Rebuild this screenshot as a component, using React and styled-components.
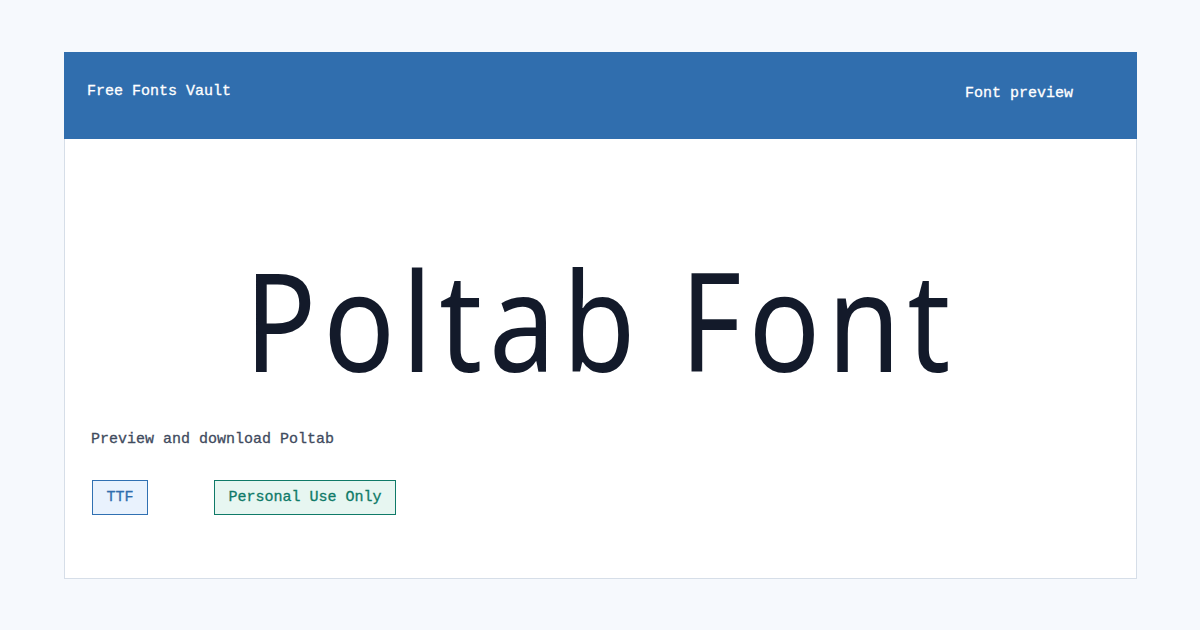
import React from "react";
import styled, { createGlobalStyle } from "styled-components";

const GlobalStyle = createGlobalStyle`
  html, body {
    margin: 0;
    padding: 0;
    background: #f6f9fd;
  }
  body {
    font-family: "Liberation Mono", "DejaVu Sans Mono", monospace;
    -webkit-text-stroke: 0.3px currentColor;
  }
`;

const Page = styled.div`
  width: 1200px;
  height: 630px;
  box-sizing: border-box;
  padding: 52px 63px 0 64px;
`;

const Card = styled.div`
  height: 527px;
  box-sizing: border-box;
  background: #ffffff;
  border: 1px solid #d6dee8;
  display: flex;
  flex-direction: column;
`;

const Header = styled.header`
  height: 87px;
  margin: -1px -1px 0;
  background: #306eae;
  color: #ffffff;
  display: flex;
  justify-content: space-between;
  align-items: flex-start;
  padding: 0 64px 0 23px;
  box-sizing: border-box;
  font-size: 15px;
`;

const Brand = styled.div`
  padding-top: 31px;
`;

const Nav = styled.div`
  padding-top: 33px;
`;

const Body = styled.main`
  flex: 1;
  display: flex;
  flex-direction: column;
  padding: 0 26px;
`;

const Title = styled.h1`
  margin: 110px 6px 0 0;
  text-align: center;
  font-family: "Noto Sans", "Open Sans", sans-serif;
  font-weight: 400;
  font-size: 138px;
  line-height: 1;
  color: #131a2a;
  -webkit-text-stroke: 0;
`;

/* the display face is narrow with open spacing */
const TitleText = styled.span`
  display: inline-block;
  padding-left: 8px;
  letter-spacing: 8px;
  transform: scaleX(0.86);
  transform-origin: center;
`;

const Subtitle = styled.p`
  margin: 44px 0 0;
  font-size: 15px;
  color: #3f4b5e;
`;

const Tags = styled.div`
  display: flex;
  gap: 66px;
  margin-top: 32px;
  padding-left: 1px;
`;

const Tag = styled.span`
  display: inline-flex;
  align-items: center;
  height: 35px;
  box-sizing: border-box;
  padding: 0 13.5px;
  font-size: 15px;
  border: 1px solid ${(p) => (p.$tone === "green" ? "#0f7a68" : "#3070b2")};
  background: ${(p) => (p.$tone === "green" ? "#e7f6f1" : "#e9f2fd")};
  color: ${(p) => (p.$tone === "green" ? "#0f7a68" : "#2f6dad")};
`;

export default function App() {
  return (
    <>
      <GlobalStyle />
      <Page>
        <Card>
          <Header>
            <Brand>Free Fonts Vault</Brand>
            <Nav>Font preview</Nav>
          </Header>
          <Body>
            <Title>
              <TitleText>Poltab Font</TitleText>
            </Title>
            <Subtitle>Preview and download Poltab</Subtitle>
            <Tags>
              <Tag>TTF</Tag>
              <Tag $tone="green">Personal Use Only</Tag>
            </Tags>
          </Body>
        </Card>
      </Page>
    </>
  );
}
